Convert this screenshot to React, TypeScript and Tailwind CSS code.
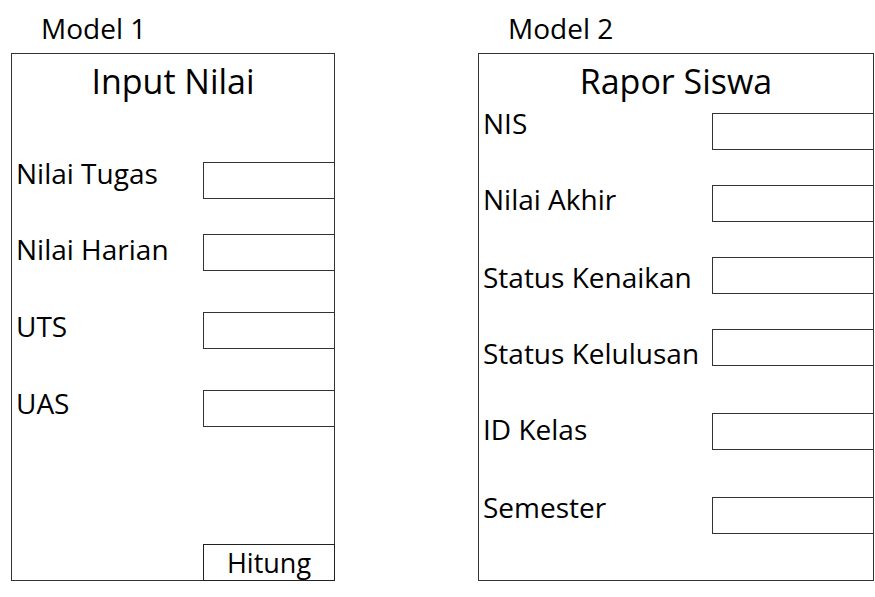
type Field = {
    label: string;
    rowClass: string;
    labelClass: string;
};

const inputNilaiFields: Field[] = [
    { label: "Nilai Tugas", rowClass: "mt-[58px]", labelClass: "-mt-[7px]" },
    { label: "Nilai Harian", rowClass: "mt-[35px]", labelClass: "-mt-[3px]" },
    { label: "UTS", rowClass: "mt-[41px]", labelClass: "-mt-[4px]" },
    { label: "UAS", rowClass: "mt-[41px]", labelClass: "-mt-[5px]" },
];

const raporFields: Field[] = [
    { label: "NIS", rowClass: "mt-[9px]", labelClass: "-mt-[8px]" },
    { label: "Nilai Akhir", rowClass: "mt-[35px]", labelClass: "-mt-[4px]" },
    { label: "Status Kenaikan", rowClass: "mt-[35px]", labelClass: "mt-[2px]" },
    { label: "Status Kelulusan", rowClass: "mt-[35px]", labelClass: "mt-[6px]" },
    { label: "ID Kelas", rowClass: "mt-[47px]", labelClass: "-mt-[2px]" },
    { label: "Semester", rowClass: "mt-[47px]", labelClass: "-mt-[8px]" },
];

function FieldRow({ field, boxWidth }: { field: Field; boxWidth: string }) {
    return (
        <div className={`flex h-[37px] items-start justify-between pl-[4px] ${field.rowClass}`}>
            <span className={`whitespace-nowrap text-[28px] leading-[36px] ${field.labelClass}`}>
                {field.label}
            </span>
            <div className={`h-[37px] -mr-px border border-[#333] bg-white ${boxWidth}`} />
        </div>
    );
}

function ModelColumn({
    caption,
    title,
    className,
    children,
}: {
    caption: string;
    title: string;
    className: string;
    children: React.ReactNode;
}) {
    return (
        <div className={`flex flex-col ${className}`}>
            <div className="h-[53px] pl-[30px] pt-[10px] text-[28px] leading-[36px]">{caption}</div>
            <div className="flex h-[528px] flex-col border border-[#333]">
                <div className="mt-[4px] text-center text-[34px] leading-[46px]">{title}</div>
                {children}
            </div>
        </div>
    );
}

export default function App() {
    return (
        <div className="flex h-[597px] w-[875px] bg-white font-['Open_Sans',sans-serif] text-black">
            {/* Model 1 */}
            <ModelColumn caption="Model 1" title="Input Nilai" className="ml-[11px] w-[324px]">
                {inputNilaiFields.map((f) => (
                    <FieldRow key={f.label} field={f} boxWidth="w-[132px]" />
                ))}
                <div className="mt-auto -mb-px flex justify-end">
                    <button className="h-[37px] w-[132px] -mr-px border border-[#222] bg-white text-[27px] leading-[34px]">
                        Hitung
                    </button>
                </div>
            </ModelColumn>

            {/* Model 2 */}
            <ModelColumn caption="Model 2" title="Rapor Siswa" className="ml-[143px] w-[396px]">
                {raporFields.map((f) => (
                    <FieldRow key={f.label} field={f} boxWidth="w-[162px]" />
                ))}
            </ModelColumn>
        </div>
    );
}
